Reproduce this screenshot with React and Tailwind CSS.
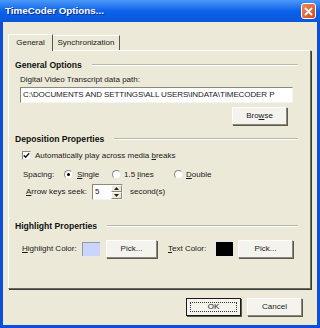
import React from "react";

const Btn = ({ children, className = "", focus = false }) => (
  <div
    className={`flex items-center justify-center bg-[#f4f3ee] border ${
      focus ? "border-[#1b1b1b]" : "border-[#ffffff] border-r-[#8b8878] border-b-[#8b8878]"
    } shadow-[1px_1px_0_#5c5a50] ${className}`}
  >
    {focus ? (
      <div className="flex items-center justify-center w-[calc(100%-6px)] h-[calc(100%-6px)] border border-dotted border-[#333]">
        {children}
      </div>
    ) : (
      children
    )}
  </div>
);

const Group = ({ title }) => (
  <div className="flex items-center h-[10px]">
    <span className="text-[8.6px] font-bold text-[#111] leading-none whitespace-nowrap">{title}</span>
    <div className="flex-1 ml-[10px] mr-[12px] h-[2px] border-t border-t-[#b9b7a8] border-b border-b-white" />
  </div>
);

const Radio = ({ on }) => (
  <div className="shrink-0 w-[9px] h-[9px] rounded-full bg-white border border-[#8a8a80] border-r-[#e8e8e8] border-b-[#e8e8e8] flex items-center justify-center">
    {on && <div className="w-[3px] h-[3px] rounded-full bg-black" />}
  </div>
);

export default function App() {
  return (
    <div className="w-[320px] h-[328px] flex flex-col bg-[#0a4fd8] font-['Liberation_Sans',Arial,sans-serif] text-[8px] text-[#1a1a1a] overflow-hidden">
      {/* title bar */}
      <div className="h-[22px] flex items-center justify-between pl-[5px] pr-[4px] bg-gradient-to-b from-[#4a98f8] via-[#0a62ea] to-[#0b57dc]">
        <span className="text-white font-bold text-[9.8px] leading-none [text-shadow:1px_1px_0_#0a2e8a]">
          TimeCoder Options...
        </span>
        <div className="w-[15px] h-[16px] rounded-[3px] border border-white bg-gradient-to-br from-[#f0895a] to-[#d4441c] flex items-center justify-center">
          <svg width="9" height="9" viewBox="0 0 9 9">
            <path d="M1.5 1.5 L7.5 7.5 M7.5 1.5 L1.5 7.5" stroke="white" strokeWidth="1.8" strokeLinecap="round" />
          </svg>
        </div>
      </div>

      {/* body */}
      <div className="flex-1 mx-[3px] mb-[3px] bg-[#ece9d8] flex flex-col pt-[11px]">
        {/* tabs */}
        <div className="flex items-end pl-[5px] h-[17px]">
          <div className="h-[17px] w-[45px] bg-[#ece9d8] border-t border-l border-white border-r border-r-[#555] flex items-center justify-center relative z-10 -mb-px">
            <span className="leading-none">General</span>
          </div>
          <div className="h-[15px] w-[67px] border-t border-white border-r border-r-[#555] flex items-center justify-center">
            <span className="leading-none">Synchronization</span>
          </div>
        </div>

        {/* panel */}
        <div className="ml-[5px] mr-[6px] h-[239px] border border-white border-r-[#6b6a60] border-b-[#6b6a60] shadow-[1px_1px_0_#3c3c3c] flex flex-col pl-[6px] pt-[9px]">
          <Group title="General Options" />
          <div className="mt-[6px] ml-[5px] leading-none">Digital Video Transcript data path:</div>
          <div className="mt-[3px] ml-[5px] w-[273px] h-[16px] bg-white border border-[#8a887c] border-r-[#f4f4f4] border-b-[#f4f4f4] flex items-center pl-[2px] overflow-hidden">
            <span className="leading-none whitespace-nowrap tracking-[-0.1px]">
              C:\DOCUMENTS AND SETTINGS\ALL USERS\INDATA\TIMECODER P
            </span>
          </div>
          <div className="flex justify-end mr-[23px] mt-[4px]">
            <Btn className="w-[55px] h-[18px]">
              <span className="leading-none">
                Bro<span className="underline">w</span>se
              </span>
            </Btn>
          </div>

          <div className="mt-[9px]">
            <Group title="Deposition Properties" />
          </div>
          <div className="flex items-center mt-[7px] ml-[7px]">
            <div className="shrink-0 w-[9px] h-[9px] bg-white border border-[#8a8a80] border-r-[#e8e8e8] border-b-[#e8e8e8] flex items-center justify-center">
              <svg width="7" height="7" viewBox="0 0 7 7">
                <path d="M0.8 3.3 L2.6 5.2 L6.2 1.3" stroke="#111" strokeWidth="1.4" fill="none" />
              </svg>
            </div>
            <span className="ml-[4px] leading-none">
              Automatically play across media <span className="underline">b</span>reaks
            </span>
          </div>
          <div className="flex items-center mt-[10px] ml-[8px]">
            <span className="shrink-0 leading-none w-[41px]">Spacing:</span>
            <Radio on />
            <span className="shrink-0 ml-[4px] leading-none w-[35px]">
              <span className="underline">S</span>ingle
            </span>
            <Radio />
            <span className="shrink-0 ml-[3px] leading-none w-[50px]">
              1.5 <span className="underline">l</span>ines
            </span>
            <Radio />
            <span className="ml-[3px] leading-none">
              <span className="underline">D</span>ouble
            </span>
          </div>
          <div className="flex items-center mt-[5px] ml-[11px]">
            <span className="shrink-0 leading-none w-[66px]">
              <span className="underline">A</span>rrow keys seek:
            </span>
            <div className="w-[31px] h-[16px] bg-white border border-[#8a887c] border-r-[#f4f4f4] border-b-[#f4f4f4] flex">
              <span className="flex-1 pl-[2px] flex items-center leading-none">5</span>
              <div className="w-[11px] flex flex-col bg-[#ece9d8]">
                <div className="flex-1 flex items-center justify-center border border-white border-r-[#8b8878] border-b-[#8b8878]">
                  <svg width="5" height="3" viewBox="0 0 5 3"><path d="M0 3 L2.5 0 L5 3Z" fill="#222" /></svg>
                </div>
                <div className="flex-1 flex items-center justify-center border border-white border-r-[#8b8878] border-b-[#8b8878]">
                  <svg width="5" height="3" viewBox="0 0 5 3"><path d="M0 0 L2.5 3 L5 0Z" fill="#222" /></svg>
                </div>
              </div>
            </div>
            <span className="ml-[7px] leading-none">second(s)</span>
          </div>

          <div className="mt-[21px]">
            <Group title="Highlight Properties" />
          </div>
          <div className="flex items-center mt-[9px] ml-[7px]">
            <span className="shrink-0 leading-none w-[59px]">
              <span className="underline">H</span>ighlight Color:
            </span>
            <div className="w-[20px] h-[16px] bg-[#c9d5fd] border border-[#e8e8e8] shadow-[inset_1px_1px_0_#9a9a90]" />
            <Btn className="ml-[5px] w-[51px] h-[18px]">
              <span className="leading-none">Pick...</span>
            </Btn>
            <span className="shrink-0 ml-[11px] leading-none w-[47px]">
              <span className="underline">T</span>ext Color:
            </span>
            <div className="w-[19px] h-[16px] bg-black border border-[#e8e8e8]" />
            <Btn className="ml-[4px] w-[55px] h-[18px]">
              <span className="leading-none">Pick...</span>
            </Btn>
          </div>
        </div>

        {/* footer buttons */}
        <div className="flex justify-end mt-[9px] mr-[15px] gap-[6px]">
          <Btn focus className="w-[55px] h-[18px]">
            <span className="leading-none">OK</span>
          </Btn>
          <Btn className="w-[55px] h-[18px]">
            <span className="leading-none">Cancel</span>
          </Btn>
        </div>
      </div>
    </div>
  );
}
